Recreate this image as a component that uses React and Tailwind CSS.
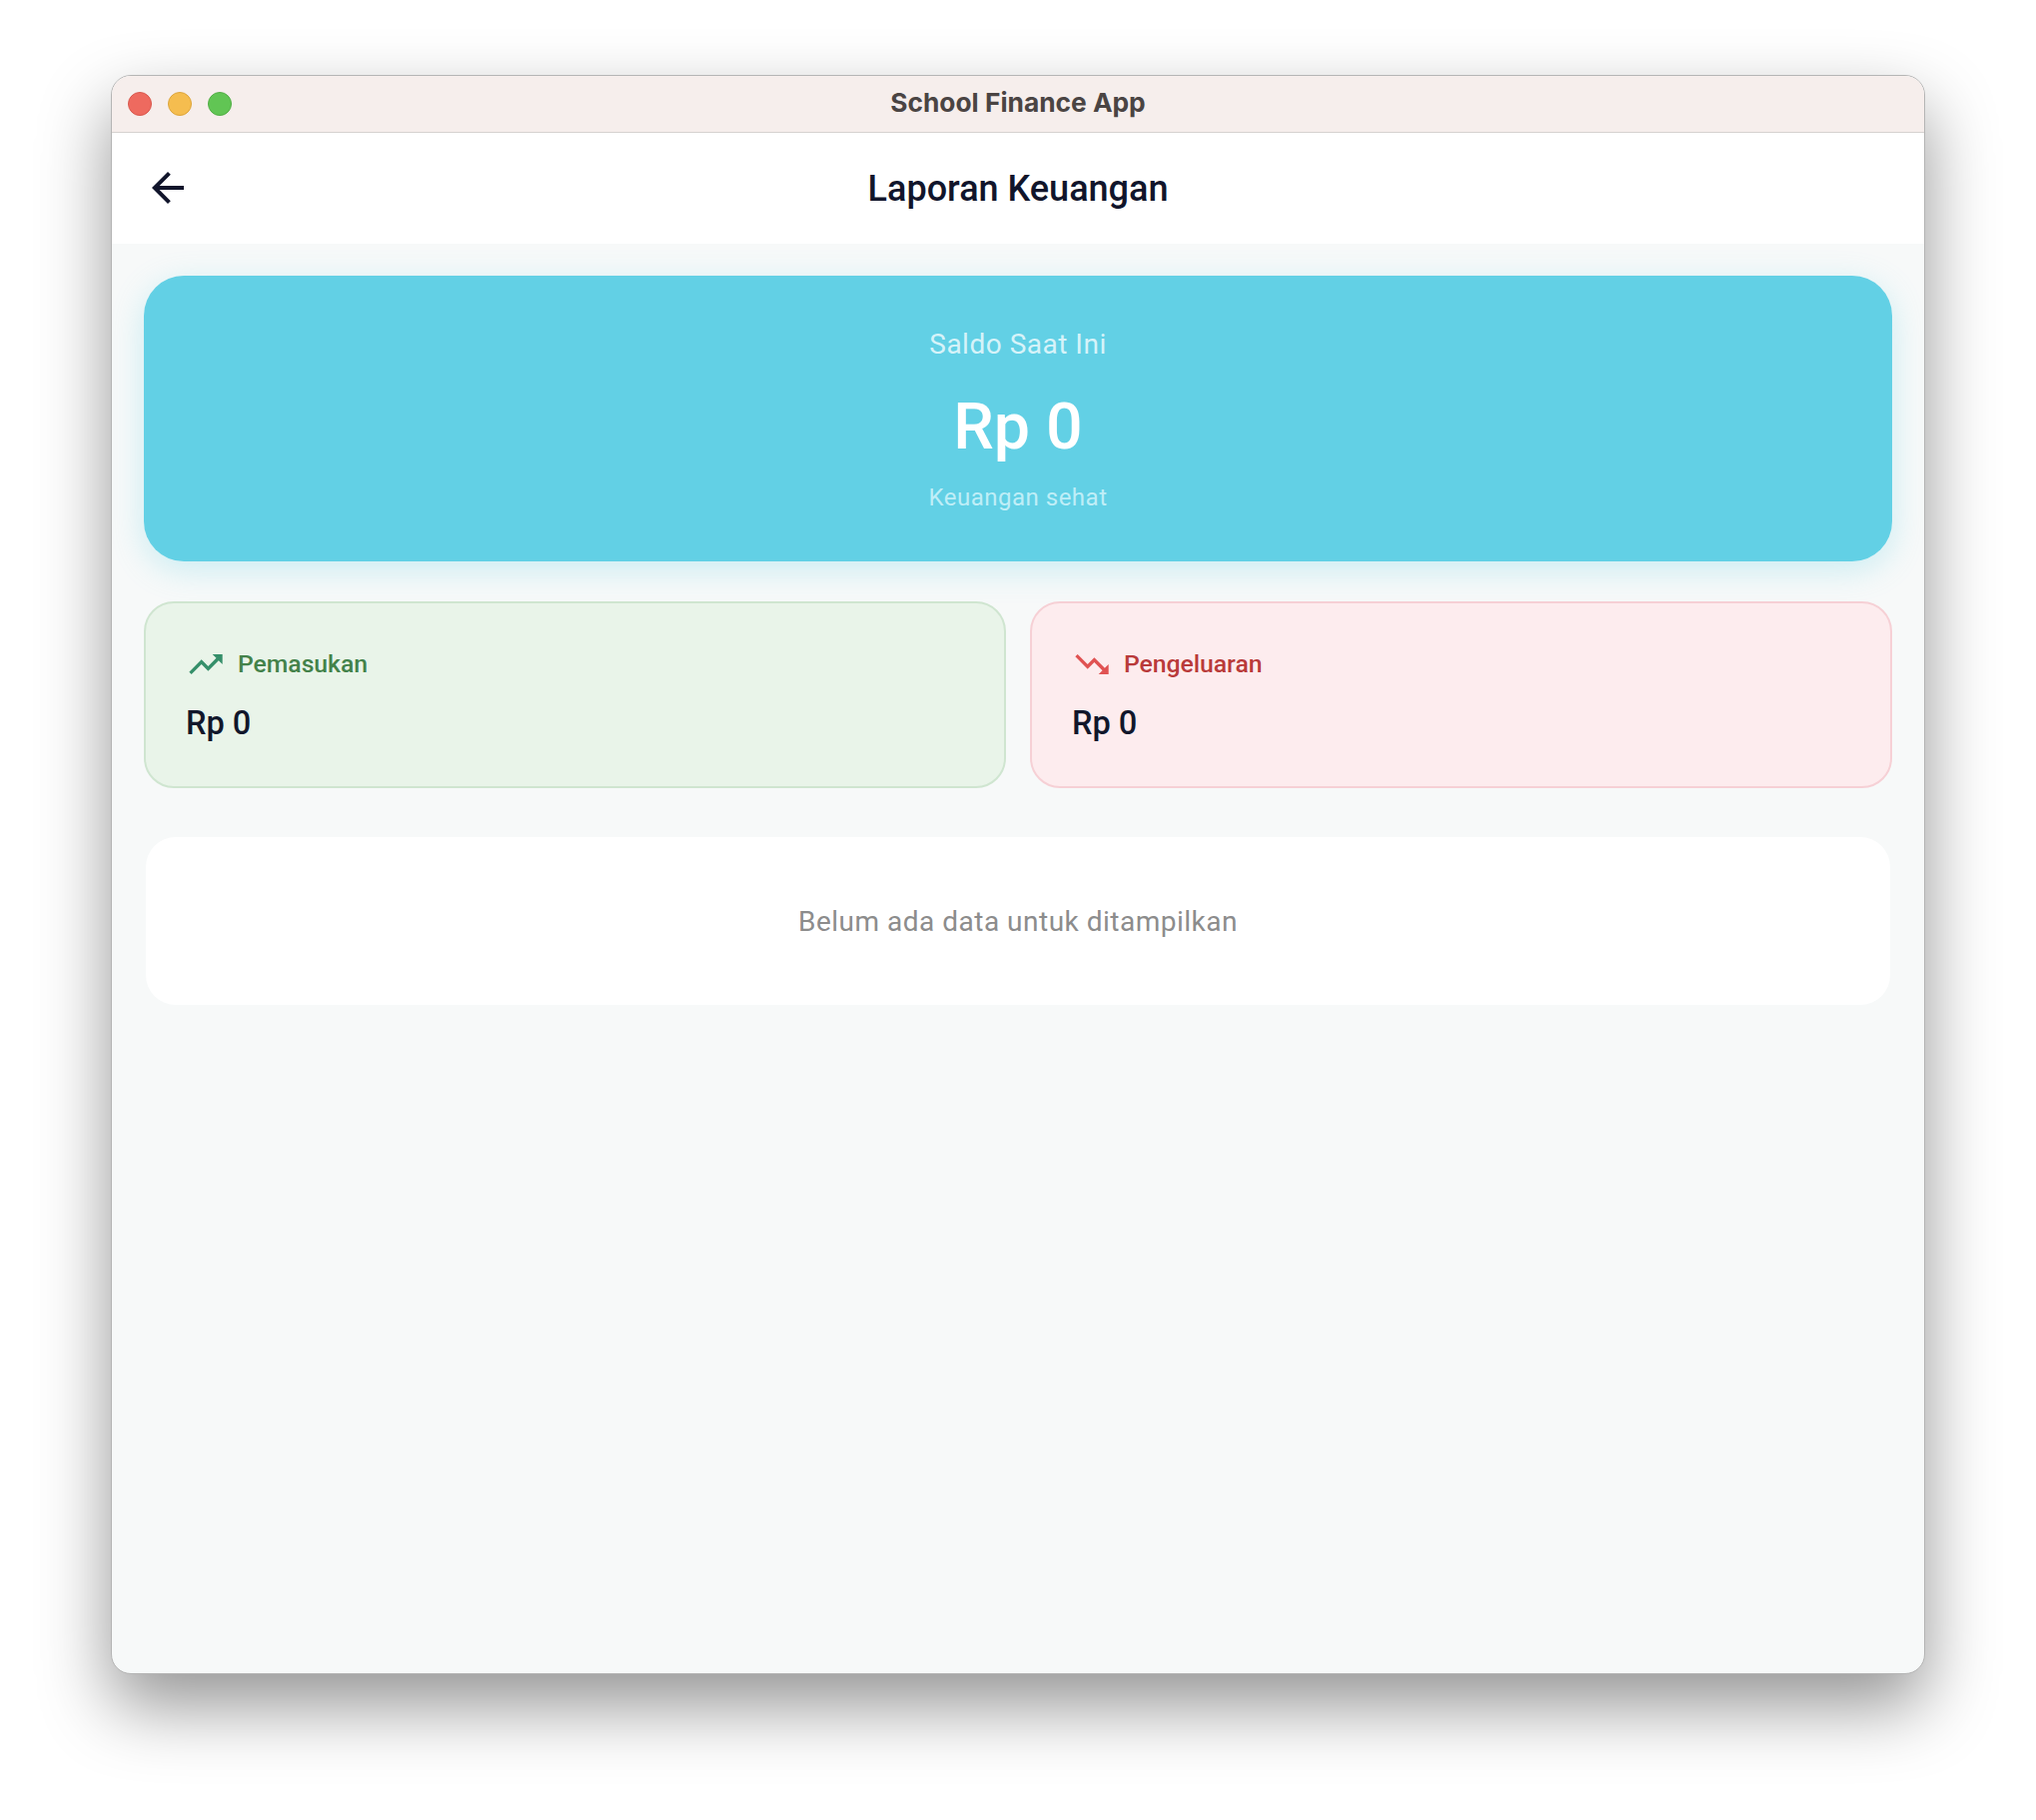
import React from 'react';

function TrafficLight({ fill, ring }) {
  return <span className={`block w-6 h-6 rounded-full border ${fill} ${ring}`} />;
}

function StatCard({ card, icon, iconColor, label, labelColor }) {
  return (
    <div className={`flex-1 h-[187px] rounded-[30px] border-2 pl-10 pt-[41px] ${card}`}>
      <div className="flex items-center h-10">
        <svg className={`w-10 h-10 ${iconColor}`} viewBox="0 0 24 24" fill="currentColor">
          <path d={icon} />
        </svg>
        <span className={`ml-3 text-[24.7px] font-medium ${labelColor}`}>{label}</span>
      </div>
      <div className="mt-[19px] text-[32.5px] leading-[40px] font-medium text-[#11172b]">Rp 0</div>
    </div>
  );
}

export default function App() {
  return (
    <div className="min-h-[1822px] bg-white pt-[75px] pl-[111px] font-['Roboto',sans-serif]">
      <div className="w-[1816px] h-[1601px] rounded-[20px] overflow-hidden flex flex-col bg-[#f7f9f9] border border-[#b5b5b5] shadow-[0_32px_70px_rgba(0,0,0,0.42)]">
        {/* title bar */}
        <div className="relative h-[57px] shrink-0 flex items-center justify-center pb-[3px] bg-[#f6eeec] border-b border-[#d6d2d0]">
          <div className="absolute left-4 top-4 flex gap-4">
            <TrafficLight fill="bg-[#ee6a5f]" ring="border-[#d8584e]" />
            <TrafficLight fill="bg-[#f5bd4f]" ring="border-[#dca53c]" />
            <TrafficLight fill="bg-[#61c554]" ring="border-[#52ad46]" />
          </div>
          <span className="font-['Inter',sans-serif] text-[26.3px] font-bold text-[#4a4443]">School Finance App</span>
        </div>

        {/* app bar */}
        <div className="relative h-[111px] shrink-0 flex items-center justify-center bg-white">
          <svg className="absolute left-8 top-[31px] w-12 h-12 text-[#11152b]" viewBox="0 0 24 24" fill="currentColor">
            <path d="M20 11H7.83l5.59-5.59L12 4l-8 8 8 8 1.41-1.41L7.83 13H20v-2z" />
          </svg>
          <h1 className="text-[36px] font-medium text-[#11152b]">Laporan Keuangan</h1>
        </div>

        {/* body */}
        <div className="flex-1 px-8 pt-8">
          <div className="h-[286px] rounded-[40px] bg-[#62d0e5] flex flex-col items-center shadow-[0_8px_32px_rgba(96,208,230,0.3)]">
            <p className="mt-[49px] text-[28px] leading-[40px] tracking-[0.5px] text-[#d6f3f9]">Saldo Saat Ini</p>
            <p className="mt-[24px] text-[64.5px] leading-[76px] font-medium text-white">Rp 0</p>
            <p className="mt-[17px] text-[24px] leading-[32px] tracking-[0.5px] text-[#bfeef7]">Keuangan sehat</p>
          </div>

          <div className="flex gap-6 mt-10">
            <StatCard
              card="bg-[#e9f4e9] border-[#cfe5d0]"
              icon="M16 6l2.29 2.29-4.88 4.88-4-4L2 16.59 3.41 18l6-6 4 4 6.3-6.29L22 12V6z"
              iconColor="text-[#358f6a]"
              label="Pemasukan"
              labelColor="text-[#43824a]"
            />
            <StatCard
              card="bg-[#fdecee] border-[#f6d0d5]"
              icon="M16 18l2.29-2.29-4.88-4.88-4 4L2 7.41 3.41 6l6 6 4-4 6.3 6.29L22 12v6z"
              iconColor="text-[#e05252]"
              label="Pengeluaran"
              labelColor="text-[#b93a3a]"
            />
          </div>

          <div className="mt-[49px] mx-0.5 h-[168px] pt-[2px] rounded-[30px] bg-white flex items-center justify-center">
            <p className="text-[28px] tracking-[0.5px] text-[#8c8c8c]">Belum ada data untuk ditampilkan</p>
          </div>
        </div>
      </div>
    </div>
  );
}
